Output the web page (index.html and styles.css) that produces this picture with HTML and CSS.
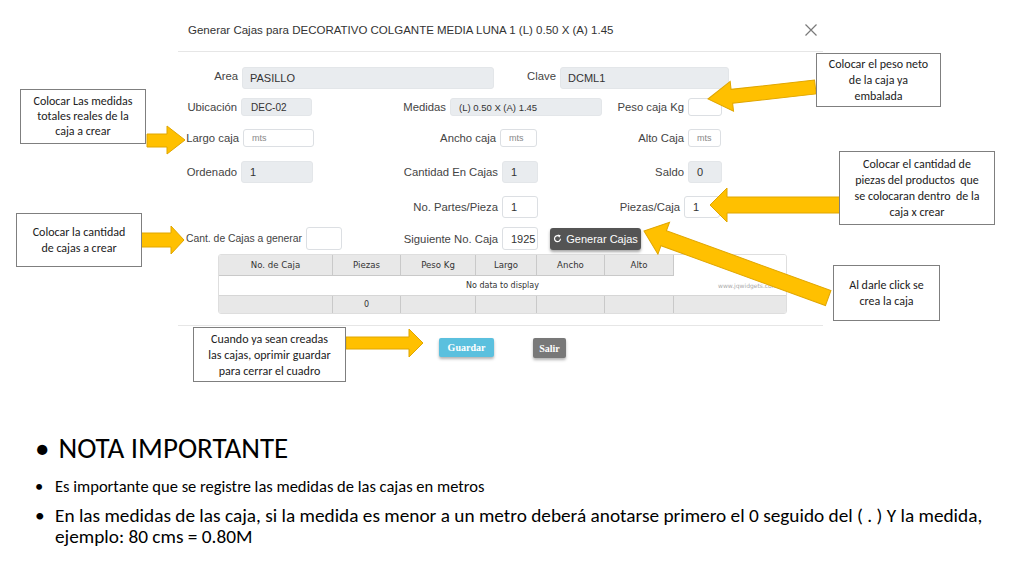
FILE: index.html
```html
<!DOCTYPE html>
<html lang="es">
<head>
<meta charset="utf-8">
<title>Generar Cajas</title>
<link rel="stylesheet" href="styles.css">
</head>
<body>
<div class="slide">
  <section class="dialog">
    <header class="dlg-head">
      <h1 class="dlg-title">Generar Cajas para DECORATIVO COLGANTE MEDIA LUNA 1 (L) 0.50 X (A) 1.45</h1>
      <svg class="dlg-close" viewBox="0 0 12 12" width="12" height="12"><path d="M0.5 0.5L11.5 11.5M11.5 0.5L0.5 11.5" stroke="#7a7a7a" stroke-width="1.2"/></svg>
    </header>

    <div class="dlg-body">
      <div class="row r1">
        <span class="lbl lbl-top">Area</span><span class="fld ro big">PASILLO</span>
        <span class="lbl lbl-top">Clave</span><span class="fld ro big">DCML1</span>
      </div>
      <div class="row r2">
        <span class="lbl">Ubicación</span><span class="fld ro sm">DEC-02</span>
        <span class="lbl">Medidas</span><span class="fld ro xs">(L) 0.50 X (A) 1.45</span>
        <span class="lbl">Peso caja Kg</span><span class="fld"></span>
      </div>
      <div class="row r3">
        <span class="lbl">Largo caja</span><span class="fld ph">mts</span>
        <span class="lbl">Ancho caja</span><span class="fld ph">mts</span>
        <span class="lbl">Alto Caja</span><span class="fld ph">mts</span>
      </div>
      <div class="row r4">
        <span class="lbl">Ordenado</span><span class="fld ro">1</span>
        <span class="lbl">Cantidad En Cajas</span><span class="fld ro">1</span>
        <span class="lbl">Saldo</span><span class="fld ro">0</span>
      </div>
      <div class="row r5">
        <span class="lbl">No. Partes/Pieza</span><span class="fld">1</span>
        <span class="lbl">Piezas/Caja</span><span class="fld">1</span>
      </div>
      <div class="row r6">
        <span class="lbl lbl-long">Cant. de Cajas a generar</span><span class="fld"></span>
        <span class="lbl">Siguiente No. Caja</span><span class="fld">1925</span>
        <span></span>
        <button class="btn-gen" type="button"><svg viewBox="0 0 10 10" width="9" height="9"><path d="M8.3 5.3A3.3 3.3 0 1 1 6.6 2.3" fill="none" stroke="#fff" stroke-width="1.3"/><path d="M5.2 0.6L8.6 1.4L6.8 4.3Z" fill="#fff"/></svg>Generar Cajas</button>
      </div>

      <div class="grid">
        <div class="g-row g-head">
          <span>No. de Caja</span><span>Piezas</span><span>Peso Kg</span><span>Largo</span><span>Ancho</span><span>Alto</span><span class="g-rest"></span>
        </div>
        <div class="g-empty">No data to display<span class="g-mark">www.jqwidgets.com</span></div>
        <div class="g-row g-foot">
          <span></span><span>0</span><span></span><span></span><span></span><span></span><span class="g-rest"></span>
        </div>
      </div>
    </div>

    <footer class="dlg-foot">
      <button class="btn btn-save" type="button">Guardar</button>
      <button class="btn btn-exit" type="button">Salir</button>
    </footer>
  </section>

  <section class="notes">
    <h2 class="note-title">NOTA IMPORTANTE</h2>
    <ul class="note-list">
      <li class="note-a">Es importante que se registre las medidas de las cajas en metros</li>
      <li class="note-b">En las medidas de las caja, si la medida es menor a un metro deberá anotarse primero el 0 seguido del ( . ) Y la medida, ejemplo: 80 cms = 0.80M</li>
    </ul>
  </section>

  <!-- annotation arrows -->
  <svg class="arrows" viewBox="0 0 1024 420" width="1024" height="420">
    <g fill="#ffc000" stroke="#e0a600" stroke-width="1">
      <polygon points="147,134 167,134 167,126 185,140 167,154 167,147 147,147"/>
      <polygon points="141,233 171,233 171,226 184,240 171,254 171,247 141,247"/>
      <polygon transform="translate(708 99) rotate(-6.4)" points="0,0 24,-15 24,-7 108,-7 108,7 24,7 24,15"/>
      <polygon points="710,205 727,188 727,197 840,197 840,213 727,213 727,222"/>
      <polygon transform="translate(644 231) rotate(20)" points="0,0 21,-17 21,-8 196,-8 196,8 21,8 21,17"/>
      <polygon points="346,337 409,337 409,329 423,343 409,357 409,349 346,349"/>
    </g>
  </svg>

  <div class="callout c-medidas">Colocar Las medidas<br>totales reales de la<br>caja a crear</div>
  <div class="callout c-cantidad">Colocar la cantidad<br>de cajas a crear</div>
  <div class="callout c-peso">Colocar el peso neto<br>de la caja ya<br>embalada</div>
  <div class="callout c-piezas">Colocar el cantidad de<br>piezas del productos&nbsp; que<br>se colocaran dentro&nbsp; de la<br>caja x crear</div>
  <div class="callout c-click">Al darle click se<br>crea la caja</div>
  <div class="callout c-guardar">Cuando ya sean creadas<br>las cajas, oprimir guardar<br>para cerrar el cuadro</div>
</div>
</body>
</html>
```

FILE: styles.css
```css
* { box-sizing: border-box; }

body {
  margin: 0;
  width: 1024px;
  height: 576px;
  overflow: hidden;
  background: #fff;
  font-family: "Liberation Sans", Arial, sans-serif;
  color: #333;
}

.slide {
  position: relative;
  height: 576px;
}

/* ---------- dialog ---------- */
.dialog {
  margin-left: 178px;
  width: 645px;
}

.dlg-head {
  height: 52px;
  padding: 8px 6px 0 10px;
  border-bottom: 1px solid #e6e6e6;
  display: flex;
  align-items: center;
  justify-content: space-between;
}

.dlg-title {
  margin: 0;
  font-size: 11.5px;
  font-weight: normal;
  color: #333;
}

.dlg-body {
  padding: 15px 0 11px;
  border-bottom: 1px solid #e6e6e6;
}

.row {
  display: grid;
  align-items: center;
  font-size: 11.3px;
}

.lbl {
  text-align: right;
  padding-right: 4px;
  color: #444;
  white-space: nowrap;
}

.lbl-top { padding-bottom: 4px; }
.lbl-long { font-size: 10.4px; }

.fld {
  height: 100%;
  border: 1px solid #dcdfe3;
  border-radius: 3px;
  background: #fff;
  display: flex;
  align-items: center;
  padding-left: 8px;
  font-size: 11px;
  color: #333;
}

.fld.ro { background: #e9ecef; border-color: #e3e6e9; }
.fld.big { padding-left: 7px; }
.fld.sm { font-size: 10px; padding-left: 9px; }
.fld.xs { font-size: 9.5px; padding-left: 8px; }
.fld.ph { font-size: 9px; color: #888; padding-left: 8px; }

.r1 { height: 22px; grid-template-columns: 64px 252px 66px 169px; }
.r2 { height: 18px; margin-top: 9px; grid-template-columns: 63px 71px 138px 152px 86px 34px; }
.r3 { height: 18px; margin-top: 13px; grid-template-columns: 65px 71px 186px 37px 151px 33px; }
.r4 { height: 22px; margin-top: 14px; grid-template-columns: 63px 72px 189px 36px 150px 34px; }
.r5 { height: 22px; margin-top: 13px; grid-template-columns: 324px 36px 146px 36px; }
.r6 { height: 23px; margin-top: 9px; grid-template-columns: 128px 36px 160px 36px 12px 91px; }

.btn-gen {
  height: 22px;
  border: 0;
  border-radius: 3px;
  background: #545454;
  color: #fff;
  font-family: "Liberation Sans", Arial, sans-serif;
  font-size: 11px;
  display: flex;
  align-items: center;
  justify-content: center;
  gap: 4px;
  padding: 0;
  box-shadow: 0 2px 3px rgba(0, 0, 0, 0.35);
}

/* ---------- data grid ---------- */
.grid {
  margin: 4px 0 0 40px;
  width: 569px;
  height: 60px;
  border: 1px solid #dedede;
  border-radius: 3px;
  font-family: "DejaVu Sans", Verdana, sans-serif;
  font-size: 8px;
  color: #333;
  overflow: hidden;
}

.g-row {
  display: grid;
  grid-template-columns: 114px 68px 75px 61px 68px 69px 1fr;
}

.g-row span {
  display: flex;
  align-items: center;
  justify-content: center;
  border-right: 1px solid #c9c9c9;
  background: #e8e8e8;
}

.g-head { height: 21px; font-size: 8.6px; }
.g-head span { border-bottom: 1px solid #c9c9c9; }
.g-head .g-rest { background: #fff; border: 0; }

.g-empty {
  position: relative;
  height: 19px;
  display: flex;
  align-items: center;
  justify-content: center;
}

.g-mark {
  position: absolute;
  left: 499px;
  top: 6px;
  font-size: 6px;
  color: #aaa;
}

.g-foot { height: 18px; border-top: 1px solid #d6d6d6; }
.g-foot .g-rest { border-right: 0; }

/* ---------- dialog footer ---------- */
.dlg-foot {
  display: flex;
  align-items: flex-start;
  padding-top: 12px;
}

.btn {
  border: 0;
  border-radius: 2px;
  color: #fff;
  font-family: "Liberation Serif", "Times New Roman", serif;
  font-weight: bold;
  font-size: 10px;
  padding: 0;
  box-shadow: 0 2px 3px rgba(0, 0, 0, 0.3);
}

.btn-save {
  margin-left: 261px;
  width: 55px;
  height: 19px;
  background: #5bc0de;
}

.btn-exit {
  margin-left: 39px;
  width: 33px;
  height: 20px;
  background: #787878;
}

/* ---------- notes ---------- */
.notes {
  margin-top: 73px;
  padding-left: 35px;
  font-family: Carlito, Lato, "Open Sans", sans-serif;
  color: #000;
}

.note-title {
  margin: 0;
  font-size: 29px;
  font-weight: normal;
  line-height: 34px;
  display: flex;
  gap: 9px;
}

.note-title::before {
  content: "•";
}

.note-list {
  list-style: none;
  margin: 10px 0 0;
  padding: 0;
}

.note-list li {
  position: relative;
  padding-left: 20px;
}

.note-list li::before {
  content: "•";
  position: absolute;
  left: 0;
}

.note-a { font-size: 16.5px; line-height: 22px; }
.note-b { font-size: 19.3px; line-height: 21px; margin-top: 8px; width: 965px; }

/* ---------- annotations ---------- */
.arrows {
  position: absolute;
  left: 0;
  top: 0;
  pointer-events: none;
}

.callout {
  position: absolute;
  border: 1px solid #7f7f7f;
  background: #fff;
  font-family: Carlito, Lato, "Open Sans", sans-serif;
  font-size: 12px;
  line-height: 16px;
  color: #222;
  text-align: center;
  display: flex;
  align-items: center;
  justify-content: center;
  white-space: nowrap;
}

.c-medidas { left: 20px; top: 89px; width: 126px; height: 55px; line-height: 15px; }
.c-cantidad { left: 16px; top: 213px; width: 126px; height: 54px; }
.c-peso { left: 816px; top: 53px; width: 125px; height: 54px; }
.c-piezas { left: 839px; top: 151px; width: 156px; height: 74px; }
.c-click { left: 833px; top: 265px; width: 107px; height: 56px; }
.c-guardar { left: 193px; top: 327px; width: 153px; height: 55px; }
```
